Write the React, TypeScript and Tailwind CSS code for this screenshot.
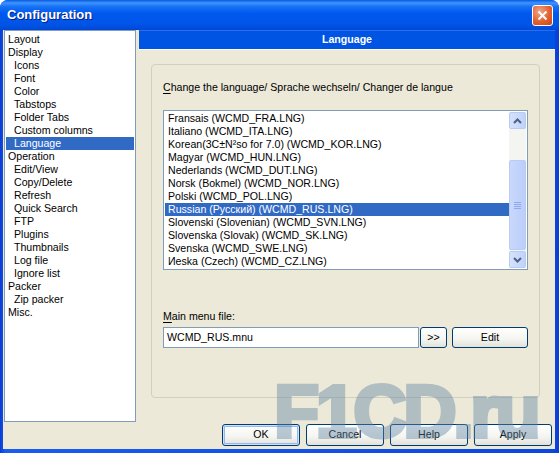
import React from "react";

const treeItems: [string, number][] = [
  ["Layout", 0],
  ["Display", 0],
  ["Icons", 1],
  ["Font", 1],
  ["Color", 1],
  ["Tabstops", 1],
  ["Folder Tabs", 1],
  ["Custom columns", 1],
  ["Language", 1],
  ["Operation", 0],
  ["Edit/View", 1],
  ["Copy/Delete", 1],
  ["Refresh", 1],
  ["Quick Search", 1],
  ["FTP", 1],
  ["Plugins", 1],
  ["Thumbnails", 1],
  ["Log file", 1],
  ["Ignore list", 1],
  ["Packer", 0],
  ["Zip packer", 1],
  ["Misc.", 0],
];

const languages = [
  "Fransais (WCMD_FRA.LNG)",
  "Italiano (WCMD_ITA.LNG)",
  "Korean(3C±N²so for 7.0) (WCMD_KOR.LNG)",
  "Magyar (WCMD_HUN.LNG)",
  "Nederlands (WCMD_DUT.LNG)",
  "Norsk (Bokmel) (WCMD_NOR.LNG)",
  "Polski (WCMD_POL.LNG)",
  "Russian (Русский) (WCMD_RUS.LNG)",
  "Slovenski (Slovenian) (WCMD_SVN.LNG)",
  "Slovenska (Slovak) (WCMD_SK.LNG)",
  "Svenska (WCMD_SWE.LNG)",
  "Иeska (Czech) (WCMD_CZ.LNG)",
];

function XpButton({
  label,
  className = "",
  isDefault = false,
}: {
  label: string;
  className?: string;
  isDefault?: boolean;
}) {
  return (
    <button
      className={`flex items-center justify-center border border-[#003C74] rounded-[3px] bg-[linear-gradient(to_bottom,#FFFFFF_0%,#F4F4F0_60%,#E3E1D8_100%)] text-black ${
        isDefault ? "shadow-[inset_0_0_0_1px_#CEE0FB,inset_0_0_0_2px_#98B8EA]" : ""
      } ${className}`}
    >
      {label}
    </button>
  );
}

function ScrollArrow({ up }: { up: boolean }) {
  return (
    <div className="h-[17px] w-[17px] flex items-center justify-center rounded-[2px] border border-[#B9CBF3] bg-[linear-gradient(to_right,#D5E2FC,#C0D2FA)]">
      <svg width="9" height="6" viewBox="0 0 9 6">
        <path
          d={up ? "M1 5 L4.5 1.5 L8 5" : "M1 1 L4.5 4.5 L8 1"}
          stroke="#4D6185"
          strokeWidth="2"
          fill="none"
        />
      </svg>
    </div>
  );
}

export default function App() {
  return (
    <div className="w-[559px] h-[453px] bg-white font-['Liberation_Sans',Arial,sans-serif] text-[10.6px] text-black">
      <div className="relative w-full h-full flex flex-col rounded-t-[8px] overflow-hidden bg-[linear-gradient(to_right,#0A3CD6,#1A5CF0_1%,#0B46DE_99%,#0A3CD6)]">
        {/* title bar */}
        <div className="h-[30px] flex items-center justify-between pl-[7px] pr-[6px] bg-[linear-gradient(to_bottom,#0A5ADF_0%,#3D95FF_10%,#1771F5_22%,#0058EE_45%,#0055E8_80%,#0147D4_100%)]">
          <span className="text-white font-bold text-[13px] [text-shadow:1px_1px_0_#0A1E82]">
            Configuration
          </span>
          <div className="w-[21px] h-[21px] rounded-[3px] border border-white flex items-center justify-center bg-[radial-gradient(circle_at_35%_30%,#F2A58A,#E3612F_55%,#C8441C)]">
            <svg width="11" height="11" viewBox="0 0 11 11">
              <path d="M1.5 1.5 L9.5 9.5 M9.5 1.5 L1.5 9.5" stroke="#fff" strokeWidth="2" />
            </svg>
          </div>
        </div>

        {/* client area */}
        <div className="flex-1 ml-[3px] mr-[4px] mb-[4px] bg-[#ECE9D8] flex">
          {/* tree */}
          <div className="ml-[1px] w-[132px] h-[392px] border border-[#7F9DB9] bg-white pt-[2px] px-[1px]">
            {treeItems.map(([name, level]) => (
              <div
                key={name}
                className={`h-[13px] leading-[13px] whitespace-nowrap ${
                  level ? "pl-[8px]" : "pl-[2px]"
                } ${name === "Language" ? "bg-[#316AC5] text-white" : ""}`}
              >
                {name}
              </div>
            ))}
          </div>

          {/* right side */}
          <div className="ml-[3px] flex-1 flex flex-col">
            <div className="h-[20px] bg-[#0054E3] border-t border-[#2A6FF0] border-b border-b-white flex items-center justify-center text-white font-bold">
              Language
            </div>

            <div className="mt-[14px] ml-[12px] w-[389px] h-[334px] border border-[#D0D0BF] rounded-[4px] pl-[11px] pt-[16px]">
              <div className="h-[13px] leading-[13px]">
                <span className="underline underline-offset-2">C</span>hange the language/ Sprache wechseln/ Changer de langue
              </div>

              <div className="mt-[16px] w-[365px] h-[160px] border border-[#7F9DB9] bg-white p-[1px] flex">
                <div className="flex-1">
                  {languages.map((l, i) => (
                    <div
                      key={l}
                      className={`h-[13px] leading-[13px] pl-[3px] whitespace-nowrap ${
                        i === 7 ? "bg-[#316AC5] text-white" : ""
                      }`}
                    >
                      {l}
                    </div>
                  ))}
                </div>
                <div className="w-[17px] flex flex-col bg-[#F4F4F0]">
                  <ScrollArrow up />
                  <div className="flex-1 pt-[31px]">
                    <div className="h-[90px] rounded-[2px] border border-[#B9CBF3] bg-[linear-gradient(to_right,#C9D8FC,#BBCEF9)] flex flex-col items-center justify-center gap-[1px]">
                      {[0, 1, 2, 3].map((k) => (
                        <div key={k} className="w-[7px] h-[1px] bg-[#8EAAF0]" />
                      ))}
                    </div>
                  </div>
                  <ScrollArrow up={false} />
                </div>
              </div>

              <div className="mt-[40px] h-[13px] leading-[13px]">
                <span className="underline underline-offset-2">M</span>ain menu file:
              </div>

              <div className="mt-[4px] flex h-[21px]">
                <div className="w-[256px] border border-[#7F9DB9] bg-white pl-[3px] flex items-center">
                  WCMD_RUS.mnu
                </div>
                <XpButton label=">>" className="ml-[1px] w-[27px]" />
                <XpButton label="Edit" className="ml-[5px] w-[76px]" />
              </div>
            </div>

            <div className="flex-1 flex items-end justify-end gap-[6px] pb-[3px] pr-[3px]">
              <XpButton label="OK" isDefault className="w-[78px] h-[22px]" />
              <XpButton label="Cancel" className="w-[78px] h-[22px]" />
              <XpButton label="Help" className="w-[78px] h-[22px]" />
              <XpButton label="Apply" className="w-[78px] h-[22px]" />
            </div>
          </div>
        </div>

        {/* watermark over the dialog */}
        <div className="absolute left-[274px] top-[375px] opacity-[0.42] pointer-events-none select-none">
          <span className="text-[74px] leading-none font-bold tracking-[-3.5px] text-[#5F84A3] [-webkit-text-stroke:4px_#5F84A3]">
            F1CD.ru
          </span>
        </div>
      </div>
    </div>
  );
}
